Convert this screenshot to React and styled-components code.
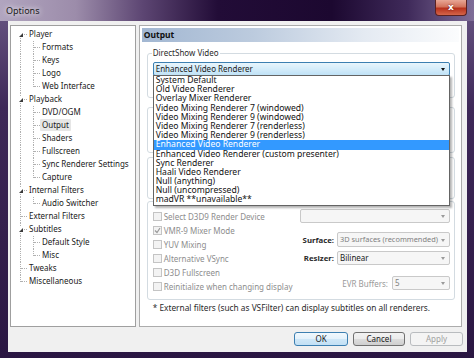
import React from "react";
import styled, { createGlobalStyle } from "styled-components";

const TREE = [
  { label: "Player", level: 0, expanded: true, first: true },
  { label: "Formats", level: 1 },
  { label: "Keys", level: 1 },
  { label: "Logo", level: 1 },
  { label: "Web Interface", level: 1, last: true },
  { label: "Playback", level: 0, expanded: true },
  { label: "DVD/OGM", level: 1 },
  { label: "Output", level: 1, selected: true },
  { label: "Shaders", level: 1 },
  { label: "Fullscreen", level: 1 },
  { label: "Sync Renderer Settings", level: 1 },
  { label: "Capture", level: 1, last: true },
  { label: "Internal Filters", level: 0, expanded: true },
  { label: "Audio Switcher", level: 1, last: true },
  { label: "External Filters", level: 0 },
  { label: "Subtitles", level: 0, expanded: true },
  { label: "Default Style", level: 1 },
  { label: "Misc", level: 1, last: true },
  { label: "Tweaks", level: 0 },
  { label: "Miscellaneous", level: 0, last: true },
];

const RENDERERS = [
  "System Default",
  "Old Video Renderer",
  "Overlay Mixer Renderer",
  "Video Mixing Renderer 7 (windowed)",
  "Video Mixing Renderer 9 (windowed)",
  "Video Mixing Renderer 7 (renderless)",
  "Video Mixing Renderer 9 (renderless)",
  "Enhanced Video Renderer",
  "Enhanced Video Renderer (custom presenter)",
  "Sync Renderer",
  "Haali Video Renderer",
  "Null (anything)",
  "Null (uncompressed)",
  "madVR **unavailable**",
];

const CHECKS = [
  { label: "Select D3D9 Render Device" },
  { label: "VMR-9 Mixer Mode", checked: true },
  { label: "YUV Mixing" },
  { label: "Alternative VSync" },
  { label: "D3D Fullscreen" },
  { label: "Reinitialize when changing display" },
];

const GlobalStyle = createGlobalStyle`
  html, body {
    margin: 0;
    padding: 0;
    background: #2a1840;
  }
  body {
    font-family: "Noto Sans", "Segoe UI", sans-serif;
    font-size: 8px;
    color: #1a1a1a;
  }
`;

const Window = styled.div`
  width: 474px;
  height: 358px;
  display: flex;
  flex-direction: column;
  box-sizing: border-box;
  background: linear-gradient(180deg, #6a5785 0%, #3e2858 30%, #2a1642 100%);
  overflow: hidden;
`;

const TitleBar = styled.div`
  height: 21px;
  flex: none;
  display: flex;
  align-items: flex-start;
  padding: 0 7px 0 6px;
  background: linear-gradient(90deg, #b1a5bf 0%, #9c8caa 16%, #5d4673 30%, #220c37 46%, #1c0830 70%, #3f2a5a 86%, #7f6d98 100%);
`;

const Title = styled.div`
  flex: 1;
  line-height: 21px;
  font-size: 9px;
  color: #1b1b1b;
  text-shadow: 0 0 5px rgba(255, 255, 255, 0.9), 0 0 8px rgba(255, 255, 255, 0.6);
`;

const CloseButton = styled.div`
  width: 32px;
  height: 16px;
  box-sizing: border-box;
  border: 1px solid #5a2121;
  border-top: none;
  border-radius: 0 0 4px 4px;
  background: linear-gradient(180deg, #e8a796 0%, #d3735c 45%, #b8321d 55%, #d4654a 100%);
  color: #fff;
  font-family: "DejaVu Sans", sans-serif;
  font-weight: bold;
  font-size: 9px;
  line-height: 15px;
  text-align: center;
  text-shadow: 0 0 2px #5a1010;
`;

const Client = styled.div`
  flex: 1;
  margin: 0 7px 6px 8px;
  background: #f0f0f0;
  display: flex;
  flex-direction: column;
  padding-top: 4px;
  box-sizing: border-box;
`;

const Body = styled.div`
  display: flex;
  gap: 3px;
  padding: 0 5px 0 2px;
  height: 302px;
`;

const Tree = styled.div`
  width: 126px;
  box-sizing: border-box;
  border: 1px solid #9f9f9f;
  background: #fff;
  padding: 2px 0 0 3px;
`;

const TreeRow = styled.div`
  display: flex;
  height: 13px;
`;

const Gutter = styled.div`
  position: relative;
  width: 13px;
  flex: none;

  &::before {
    content: "";
    position: absolute;
    left: 6px;
    top: ${(p) => (p.$up ? "0" : "6px")};
    bottom: ${(p) => (p.$down ? "0" : "6px")};
    border-left: 1px dotted #b0b0b0;
  }

  &::after {
    content: "";
    display: ${(p) => (p.$branch ? "block" : "none")};
    position: absolute;
    left: 7px;
    right: 0;
    top: 6px;
    border-top: 1px dotted #b0b0b0;
  }
`;

const Expander = styled.span`
  position: absolute;
  z-index: 1;
  left: 3px;
  top: 3px;
  width: 7px;
  height: 7px;
  background: #fff;

  &::after {
    content: "";
    position: absolute;
    right: 1px;
    bottom: 1px;
    border-left: 4px solid transparent;
    border-bottom: 4px solid #3a3a3a;
  }
`;

const TreeLabel = styled.span`
  padding: 0 2px;
  line-height: 12px;
  height: 12px;
  white-space: nowrap;
  background: ${(p) => (p.$selected ? "#e6e6e6" : "transparent")};
  border-radius: 1px;
`;

const Page = styled.div`
  width: 324px;
  box-sizing: border-box;
  border: 1px solid #acacac;
  background: #fff;
  padding: 2px 2px 0 2px;
`;

const PageHeader = styled.div`
  height: 14px;
  line-height: 14px;
  padding-left: 2px;
  font-weight: bold;
  font-size: 8.5px;
  color: #111;
  background: linear-gradient(90deg, #a2b7d2 0%, #bccbde 35%, #e4eaf2 70%, #fbfcfd 100%);
`;

const PageContent = styled.div`
  padding: 0 4px 0 5px;
`;

const Group = styled.div`
  position: relative;
  margin-top: ${(p) => p.$gap}px;
  border: 1px solid #d3dbe1;
  border-radius: 3px;
  padding: ${(p) => p.$pad};
`;

const GroupLabel = styled.span`
  position: absolute;
  left: 4px;
  top: -6px;
  padding: 0 1px;
  line-height: 10px;
  background: #fff;
  color: #2a2a2a;
`;

const ComboBox = styled.div`
  position: relative;
  box-sizing: border-box;
  height: ${(p) => p.$h || 14}px;
  width: ${(p) => (p.$w ? `${p.$w}px` : "auto")};
  border: 1px solid ${(p) => (p.$active ? "#3c7fb1" : "#c9c9c9")};
  border-radius: 2px;
  background: ${(p) =>
    p.$active ? "linear-gradient(180deg, #e8f5fc 0%, #d4ecfa 50%, #bfe2f7 100%)" : "#f6f6f6"};
  color: ${(p) => (p.$dim ? "#7f7f7f" : "#1a1a1a")};
  font-size: ${(p) => (p.$small ? "7.4px" : "inherit")};
  padding-left: 2px;
  line-height: ${(p) => (p.$h || 14) - 2}px;
  white-space: nowrap;

  &::after {
    content: "";
    position: absolute;
    right: 4px;
    top: 50%;
    margin-top: -1px;
    border-left: 2.5px solid transparent;
    border-right: 2.5px solid transparent;
    border-top: 3px solid ${(p) => (p.$active ? "#111" : "#9a9a9a")};
  }
`;

const DropList = styled.div`
  position: absolute;
  z-index: 5;
  left: -1px;
  top: 100%;
  width: calc(100% + 2px);
  box-sizing: border-box;
  border: 1px solid #646464;
  background: #fff;
  box-shadow: 2px 2px 2px rgba(0, 0, 0, 0.3);
  font-size: 8.6px;
`;

const DropItem = styled.div`
  height: 9.2px;
  line-height: 9.2px;
  padding-left: 2px;
  white-space: nowrap;
  color: ${(p) => (p.$selected ? "#fff" : "#111")};
  background: ${(p) => (p.$selected ? "#3399ff" : "transparent")};
`;

const D3DLayout = styled.div`
  display: flex;
  justify-content: space-between;
`;

const CheckColumn = styled.div`
  display: flex;
  flex-direction: column;
`;

const CheckRow = styled.div`
  height: 14px;
  display: flex;
  align-items: center;
  gap: 2px;
  color: #8d8d8d;
`;

const CheckBox = styled.span`
  width: 7px;
  height: 7px;
  border: 1px solid #c4c4c4;
  background: #f3f3f3;
  display: flex;
  align-items: center;
  justify-content: center;
`;

const SettingsColumn = styled.div`
  width: 150px;
  display: flex;
  flex-direction: column;
`;

const SettingRow = styled.div`
  display: flex;
  align-items: center;
  justify-content: flex-end;
  gap: ${(p) => p.$gap || 3}px;
  margin-top: ${(p) => p.$top}px;
`;

const SettingLabel = styled.span`
  font-weight: ${(p) => (p.$dim ? "normal" : "bold")};
  font-size: ${(p) => (p.$dim ? "8px" : "7.8px")};
  color: ${(p) => (p.$dim ? "#9a9a9a" : "#2a2a2a")};
`;

const Footnote = styled.div`
  margin-top: 3px;
  padding-left: 6px;
  line-height: 10px;
  font-size: 8.3px;
  color: #2a2a2a;
  white-space: nowrap;
`;

const ButtonRow = styled.div`
  display: flex;
  justify-content: flex-end;
  gap: 5px;
  margin-top: 5px;
  padding-right: 4px;
`;

const Button = styled.div`
  width: ${(p) => p.$w}px;
  height: 14px;
  box-sizing: border-box;
  border: 1px solid ${(p) => (p.$primary ? "#3c7fb1" : p.$disabled ? "#b9bcbf" : "#707070")};
  border-radius: 3px;
  background: ${(p) =>
    p.$disabled
      ? "#f4f4f4"
      : p.$primary
      ? "linear-gradient(180deg, #f1f8fd 0%, #e3f1fb 50%, #cfe7f7 51%, #c2e0f5 100%)"
      : "linear-gradient(180deg, #f2f2f2 0%, #ebebeb 50%, #dddddd 51%, #cfcfcf 100%)"};
  color: ${(p) => (p.$disabled ? "#a0a0a0" : "#1a1a1a")};
  text-align: center;
  line-height: 12px;
`;

const TreeItem = ({ item }) => {
  const isRoot = item.level === 0;
  return (
    <TreeRow>
      <Gutter $up={!item.first} $down={!(isRoot && item.last)} $branch={isRoot}>
        {item.expanded && <Expander />}
      </Gutter>
      {!isRoot && <Gutter $up $down={!item.last} $branch />}
      <TreeLabel $selected={item.selected}>{item.label}</TreeLabel>
    </TreeRow>
  );
};

const App = () => {
  return (
    <>
      <GlobalStyle />
      <Window>
        <TitleBar>
          <Title>Options</Title>
          <CloseButton>x</CloseButton>
        </TitleBar>
        <Client>
          <Body>
            <Tree>
              {TREE.map((item) => (
                <TreeItem key={item.label} item={item} />
              ))}
            </Tree>
            <Page>
              <PageHeader>Output</PageHeader>
              <PageContent>
                <Group $gap={11} $pad="8px 4px 21px 5px">
                  <GroupLabel>DirectShow Video</GroupLabel>
                  <ComboBox $active>
                    Enhanced Video Renderer
                    <DropList>
                      {RENDERERS.map((r) => (
                        <DropItem key={r} $selected={r === "Enhanced Video Renderer"}>
                          {r}
                        </DropItem>
                      ))}
                    </DropList>
                  </ComboBox>
                </Group>
                {/* two groups hidden under the open list */}
                <Group $gap={9} $pad="9px 4px 21px 5px">
                  <ComboBox />
                </Group>
                <Group $gap={4} $pad="9px 4px 17px 5px">
                  <ComboBox />
                </Group>
                <Group $gap={2} $pad="7px 4px 6px 5px">
                  <D3DLayout>
                    <CheckColumn>
                      {CHECKS.map((c) => (
                        <CheckRow key={c.label}>
                          <CheckBox>
                            {c.checked && (
                              <svg width="7" height="7" viewBox="0 0 7 7">
                                <polyline points="1,3.5 3,5.5 6,1" fill="none" stroke="#9a9a9a" strokeWidth="1.2" />
                              </svg>
                            )}
                          </CheckBox>
                          {c.label}
                        </CheckRow>
                      ))}
                    </CheckColumn>
                    <SettingsColumn>
                      <ComboBox $w={150} />
                      <SettingRow $top={9}>
                        <SettingLabel>Surface:</SettingLabel>
                        <ComboBox $w={113} $h={15} $dim $small>
                          3D surfaces (recommended)
                        </ComboBox>
                      </SettingRow>
                      <SettingRow $top={4}>
                        <SettingLabel>Resizer:</SettingLabel>
                        <ComboBox $w={113}>Bilinear</ComboBox>
                      </SettingRow>
                      <SettingRow $top={11} $gap={4}>
                        <SettingLabel $dim>EVR Buffers:</SettingLabel>
                        <ComboBox $w={58} $dim>
                          5
                        </ComboBox>
                      </SettingRow>
                    </SettingsColumn>
                  </D3DLayout>
                </Group>
                <Footnote>* External filters (such as VSFilter) can display subtitles on all renderers.</Footnote>
              </PageContent>
            </Page>
          </Body>
          <ButtonRow>
            <Button $w={54} $primary>
              OK
            </Button>
            <Button $w={52}>Cancel</Button>
            <Button $w={53} $disabled>
              Apply
            </Button>
          </ButtonRow>
        </Client>
      </Window>
    </>
  );
};

export default App;
